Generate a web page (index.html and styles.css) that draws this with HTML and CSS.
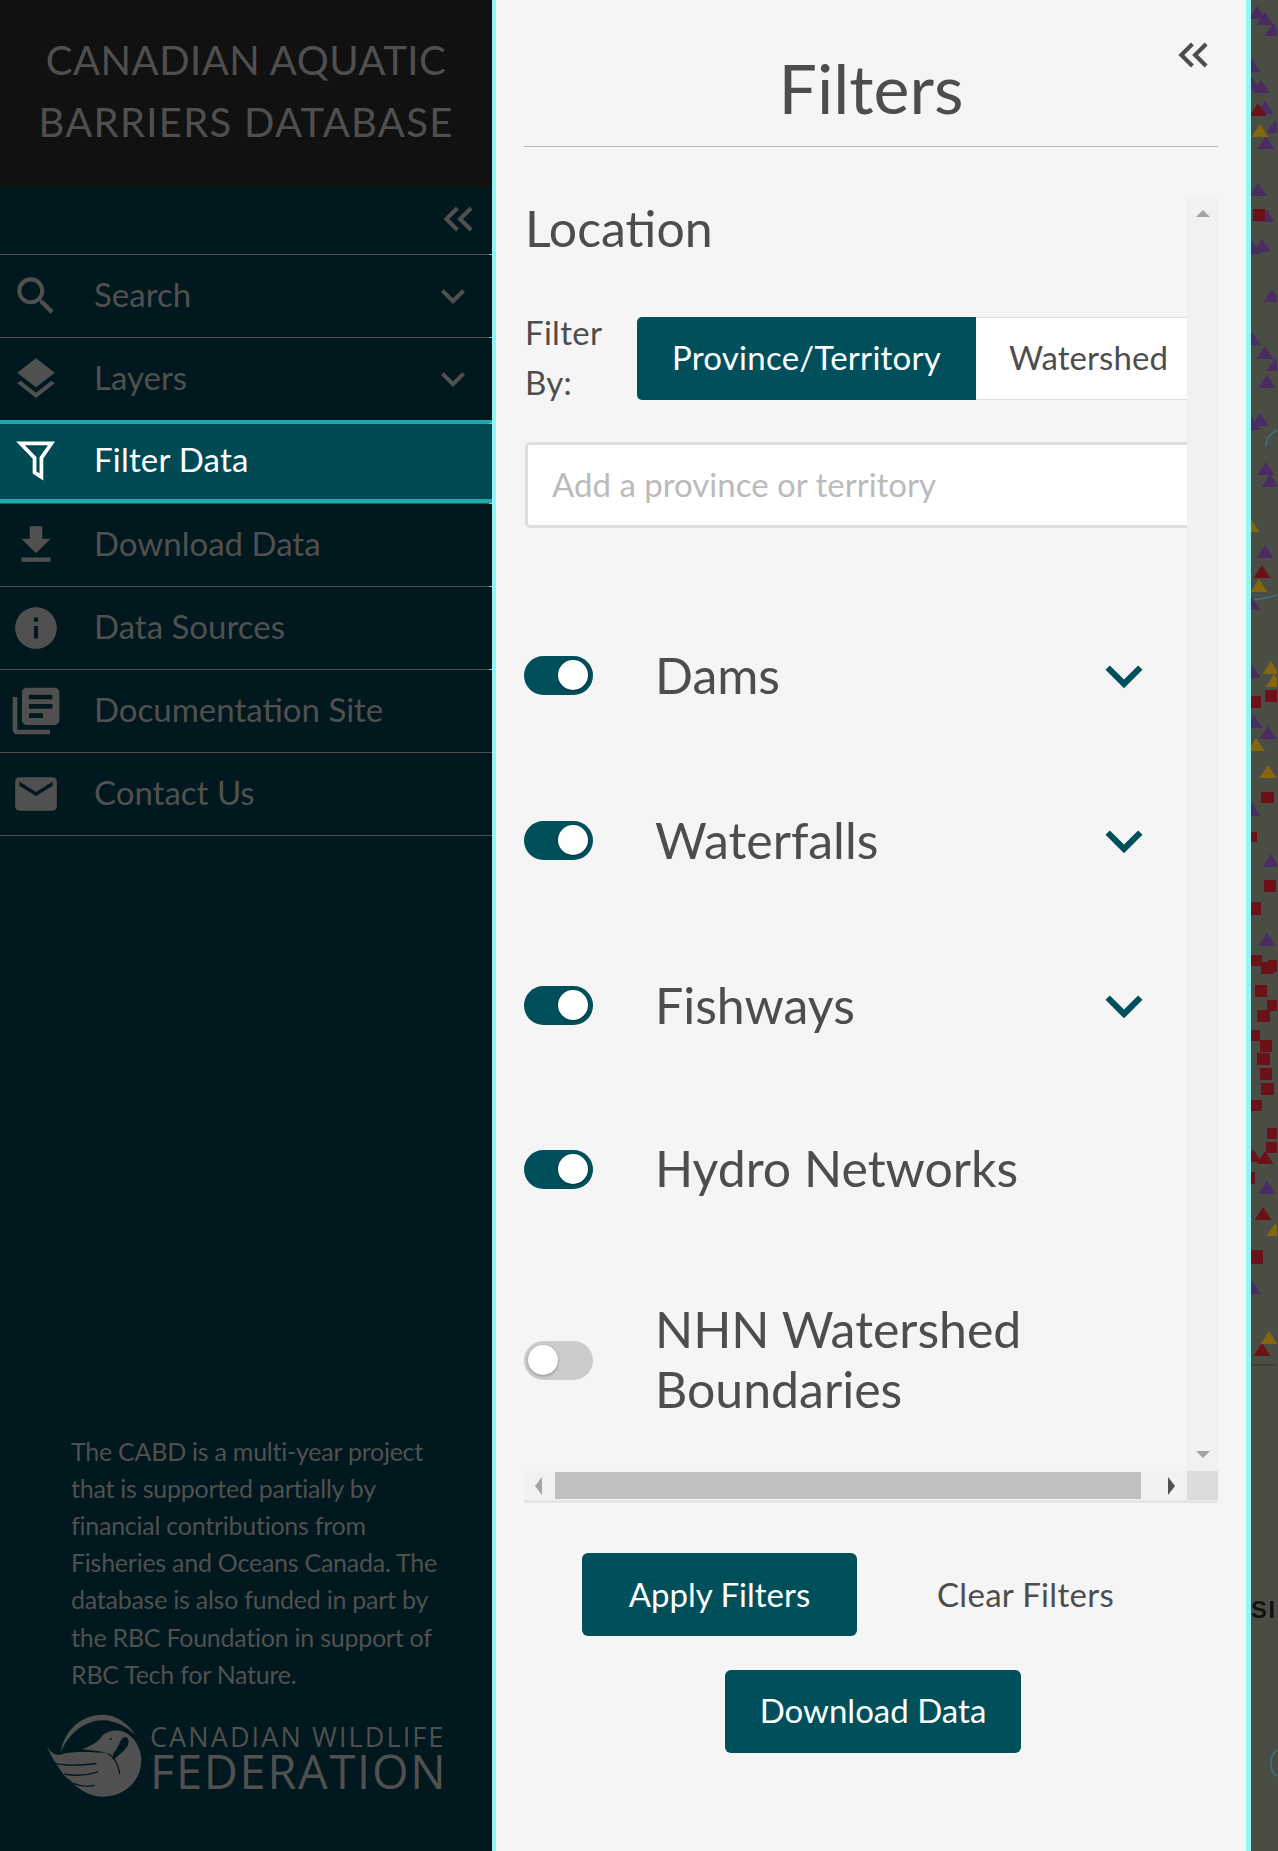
FILE: index.html
```html
<!DOCTYPE html>
<html lang="en">

<head>
    <meta charset="UTF-8">
    <meta name="viewport" content="width=device-width, initial-scale=1.0">
    <title>Canadian Aquatic Barriers Database</title>
    <link rel="stylesheet" href="styles.css">
</head>

<body>
    <aside class="sidebar">
        <div class="brand"><span class="brand-one">CANADIAN AQUATIC</span><br><span class="brand-two">BARRIERS DATABASE</span></div>
        <div class="collapse-row">
            <svg class="ico-collapse" viewBox="0 0 24 24"><path d="M17.59 18 19 16.59 14.42 12 19 7.41 17.59 6l-6 6zM11 18l1.41-1.41L7.83 12l4.58-4.59L11 6l-6 6z"/></svg>
        </div>
        <nav class="nav">
            <div class="nav-item">
                <svg class="ico" viewBox="0 0 24 24"><path d="M15.5 14h-.79l-.28-.27C15.41 12.59 16 11.11 16 9.5 16 5.91 13.09 3 9.5 3S3 5.91 3 9.5 5.91 16 9.5 16c1.61 0 3.09-.59 4.23-1.57l.27.28v.79l5 4.99L20.49 19l-4.99-5zm-6 0C7.01 14 5 11.99 5 9.5S7.01 5 9.5 5 14 7.01 14 9.5 11.99 14 9.5 14z"/></svg>
                <span class="nav-label">Search</span>
                <svg class="ico-more" viewBox="0 0 24 24"><path d="M16.59 8.59 12 13.17 7.41 8.59 6 10l6 6 6-6z"/></svg>
            </div>
            <div class="nav-item">
                <svg class="ico" viewBox="0 0 24 24"><path d="M11.99 18.54l-7.37-5.73L3 14.07l9 7 9-7-1.63-1.27-7.38 5.74zM12 16l7.36-5.73L21 9l-9-7-9 7 1.63 1.27L12 16z"/></svg>
                <span class="nav-label">Layers</span>
                <svg class="ico-more" viewBox="0 0 24 24"><path d="M16.59 8.59 12 13.17 7.41 8.59 6 10l6 6 6-6z"/></svg>
            </div>
            <div class="nav-item active">
                <svg class="ico" viewBox="0 0 24 24"><path d="M4.6 3.1H19.4L14.6 10V19.2L11.3 17V10Z" fill="none" stroke="#fff" stroke-width="1.8"/></svg>
                <span class="nav-label">Filter Data</span>
            </div>
            <div class="nav-item">
                <svg class="ico" viewBox="0 0 24 24"><path d="M19 9h-4V3H9v6H5l7 7 7-7zM5 18v2h14v-2H5z"/></svg>
                <span class="nav-label">Download Data</span>
            </div>
            <div class="nav-item">
                <svg class="ico" viewBox="0 0 24 24"><path d="M12 2C6.48 2 2 6.48 2 12s4.48 10 10 10 10-4.48 10-10S17.52 2 12 2zm1 15h-2v-6h2v6zm0-8h-2V7h2v2z"/></svg>
                <span class="nav-label">Data Sources</span>
            </div>
            <div class="nav-item">
                <svg class="ico ico-docs" viewBox="0 0 24 24"><path d="M4 6H2v14c0 1.1.9 2 2 2h14v-2H4V6zm16-4H8c-1.1 0-2 .9-2 2v12c0 1.1.9 2 2 2h12c1.1 0 2-.9 2-2V4c0-1.1-.9-2-2-2zm-1 9H9V9h10v2zm-4 4H9v-2h6v2zm4-8H9V5h10v2z"/></svg>
                <span class="nav-label">Documentation Site</span>
            </div>
            <div class="nav-item">
                <svg class="ico" viewBox="0 0 24 24"><path d="M20 4H4c-1.1 0-1.99.9-1.99 2L2 18c0 1.1.9 2 2 2h16c1.1 0 2-.9 2-2V6c0-1.1-.9-2-2-2zm0 4l-8 5-8-5V6l8 5 8-5v2z"/></svg>
                <span class="nav-label">Contact Us</span>
            </div>
        </nav>
        <div class="sidebar-foot">
            <p class="funding">The CABD is a multi-year project that is supported partially by financial contributions from Fisheries and Oceans Canada. The database is also funded in part by the RBC Foundation in support of RBC Tech for Nature.</p>
            <div class="cwf-logo">
                <svg class="cwf-mark" viewBox="15 28 295 256">
                    <path d="M62 148C70 85 120 33 190 33c40 0 75 27 98 62-26-25-63-45-98-45-55 0-105 40-128 98z"/>
                    <path d="M125 137c25-9 47-19 60-37 10-15 40-24 65-16 35 14 55 51 55 86 0 62-50 110-115 110-30 0-60-12-90-40-15-15-25-20-32-30-10-18-26-33-48-82 15 22 28 30 45 24 35-9 95-7 140-2-20-8-55-10-80-13z"/>
                    <g class="cwf-gaps">
                        <path d="M45 180c40 10 85 5 125 0"/>
                        <path d="M72 212c33 6 73 3 103-7"/>
                        <path d="M100 240c25 10 50 10 65 5"/>
                        <path d="M205 150c17 10 30 30 35 62"/>
                    </g>
                    <path class="cwf-cut" d="M255 100c13 0 15 18 7 30-10 15-27 25-40 40-7-10-2-20 6-30 12-15 12-35 27-40z"/>
                    <circle class="cwf-cut" cx="213" cy="107" r="3"/>
                </svg>
                <div class="cwf-text">
                    <div class="cwf-top">CANADIAN WILDLIFE</div>
                    <div class="cwf-bottom">FEDERATION</div>
                </div>
            </div>
        </div>
    </aside>

    <main class="panel">
        <div class="panel-head">
            <h1>Filters</h1>
            <svg class="panel-collapse" viewBox="0 0 24 24"><path d="M17.59 18 19 16.59 14.42 12 19 7.41 17.59 6l-6 6zM11 18l1.41-1.41L7.83 12l4.58-4.59L11 6l-6 6z"/></svg>
        </div>

        <div class="scroll-box">
            <div class="scroll-body">
                <div class="scroll-content">
                    <h2>Location</h2>
                    <div class="filter-by">
                        <div class="filter-by-label">Filter<br>By:</div>
                        <div class="segment">
                            <div class="seg-btn seg-on">Province/Territory</div>
                            <div class="seg-btn">Watershed</div>
                        </div>
                    </div>
                    <div class="place-input">Add a province or territory</div>

                    <div class="layer-row first">
                        <span class="toggle on"></span>
                        <span class="layer-name">Dams</span>
                        <svg class="layer-more" viewBox="0 0 24 24"><path d="M16.59 8.59 12 13.17 7.41 8.59 6 10l6 6 6-6z"/></svg>
                    </div>
                    <div class="layer-row">
                        <span class="toggle on"></span>
                        <span class="layer-name">Waterfalls</span>
                        <svg class="layer-more" viewBox="0 0 24 24"><path d="M16.59 8.59 12 13.17 7.41 8.59 6 10l6 6 6-6z"/></svg>
                    </div>
                    <div class="layer-row">
                        <span class="toggle on"></span>
                        <span class="layer-name">Fishways</span>
                        <svg class="layer-more" viewBox="0 0 24 24"><path d="M16.59 8.59 12 13.17 7.41 8.59 6 10l6 6 6-6z"/></svg>
                    </div>
                    <div class="layer-row short">
                        <span class="toggle on"></span>
                        <span class="layer-name">Hydro Networks</span>
                    </div>
                    <div class="layer-row tall">
                        <span class="toggle"></span>
                        <span class="layer-name">NHN Watershed<br>Boundaries</span>
                    </div>
                </div>
                <div class="vbar">
                    <span class="arrow-up"></span>
                    <span class="arrow-down"></span>
                </div>
            </div>
            <div class="hbar">
                <div class="hbar-track">
                    <span class="arrow-left"></span>
                    <div class="hbar-thumb"></div>
                    <span class="arrow-right"></span>
                </div>
                <div class="hbar-corner"></div>
            </div>
        </div>

        <div class="actions">
            <div class="actions-row">
                <div class="btn btn-apply">Apply Filters</div>
                <div class="btn-plain">Clear Filters</div>
            </div>
            <div class="btn btn-download">Download Data</div>
        </div>
    </main>

    <div class="map">
        <svg class="map-svg" viewBox="0 0 26 1851" width="26" height="1851">
            <defs>
                <polygon id="tri" points="-8.5,6 0,-7 8.5,6"/>
            </defs>
            <g class="map-blue">
                <path d="M26 430c-5 3-10 6-11 16M26 595c-8 3-16 4-26 5"/>
                <path d="M26 1750c-8 5-8 22 0 26"/>
            </g>
            <g class="map-purple">
                <use href="#tri" x="6" y="13"/><use href="#tri" x="14" y="19"/><use href="#tri" x="22" y="30"/>
                <use href="#tri" x="1" y="66"/><use href="#tri" x="10" y="87"/><use href="#tri" x="1" y="84"/><use href="#tri" x="14" y="108"/>
                <use href="#tri" x="24" y="127"/><use href="#tri" x="15" y="143"/><use href="#tri" x="7" y="190"/>
                <use href="#tri" x="15" y="216"/><use href="#tri" x="11" y="246"/><use href="#tri" x="1" y="248"/>
                <use href="#tri" x="21" y="296"/><use href="#tri" x="1" y="339"/><use href="#tri" x="14" y="353"/>
                <use href="#tri" x="24" y="365"/><use href="#tri" x="16" y="382"/><use href="#tri" x="1" y="424"/>
                <use href="#tri" x="9" y="420"/><use href="#tri" x="15" y="469"/><use href="#tri" x="19" y="481"/>
                <use href="#tri" x="14" y="552"/><use href="#tri" x="1" y="604"/><use href="#tri" x="17" y="733"/>
                <use href="#tri" x="1" y="672"/><use href="#tri" x="3" y="722"/><use href="#tri" x="1" y="810"/>
                <use href="#tri" x="20" y="861"/><use href="#tri" x="16" y="940"/><use href="#tri" x="16" y="1188"/>
                <use href="#tri" x="1" y="1288"/>
            </g>
            <g class="map-red">
                <use href="#tri" x="7" y="110"/><use href="#tri" x="11" y="572"/>
                <use href="#tri" x="2" y="1156"/><use href="#tri" x="14" y="1158"/><use href="#tri" x="12" y="1214"/>
                <use href="#tri" x="11" y="1350"/>
                <rect x="2" y="209" width="12" height="12"/>
                <rect x="0" y="696" width="10" height="12"/>
                <rect x="14" y="690" width="12" height="12"/>
                <rect x="10" y="792" width="13" height="11"/>
                <rect x="0" y="832" width="6" height="10"/>
                <rect x="13" y="880" width="12" height="12"/>
                <rect x="0" y="902" width="10" height="13"/>
                <rect x="0" y="955" width="11" height="11"/>
                <rect x="10" y="962" width="13" height="12"/>
                <rect x="4" y="985" width="12" height="12"/>
                <rect x="0" y="1030" width="9" height="11"/>
                <rect x="16" y="1000" width="10" height="11"/>
                <rect x="6" y="1010" width="13" height="12"/>
                <rect x="9" y="1040" width="12" height="12"/>
                <rect x="17" y="960" width="9" height="12"/>
                <rect x="6" y="1053" width="13" height="12"/>
                <rect x="9" y="1068" width="12" height="12"/>
                <rect x="10" y="1083" width="13" height="12"/>
                <rect x="0" y="1100" width="11" height="11"/>
                <rect x="16" y="1128" width="10" height="11"/>
                <rect x="15" y="1142" width="11" height="11"/>
                <rect x="0" y="1172" width="4" height="12"/>
                <rect x="0" y="1250" width="12" height="14"/>
            </g>
            <g class="map-yellow">
                <use href="#tri" x="9" y="131"/><use href="#tri" x="0" y="526"/><use href="#tri" x="8" y="586"/>
                <use href="#tri" x="20" y="668"/><use href="#tri" x="5" y="745"/><use href="#tri" x="17" y="772"/>
                <use href="#tri" x="23" y="681"/><use href="#tri" x="18" y="1338"/><use href="#tri" x="24" y="1230"/>
            </g>
            <path class="map-edge" d="M0 1365H26"/>
            <text class="map-label" x="0" y="1618">SI</text>
        </svg>
    </div>
</body>

</html>
```

FILE: styles.css
```css
* {
    box-sizing: border-box;
}

html,
body {
    margin: 0;
    padding: 0;
    height: 1851px;
    overflow: hidden;
}

body {
    display: flex;
    font-family: Lato, "Open Sans", sans-serif;
    background-color: #4a4d43;
}

/* left navigation */
.sidebar {
    width: 496px;
    flex: none;
    height: 100%;
    display: flex;
    flex-direction: column;
    background-color: #00181e;
    border-right: 4px solid #96f4f4;
    color: #505050;
}

.brand {
    height: 187px;
    padding-top: 29px;
    background-color: #111111;
    color: #4f4f4f;
    text-align: center;
    font-size: 40px;
    line-height: 62px;
}

.brand-one {
    letter-spacing: 0.5px;
}

.brand-two {
    letter-spacing: 1.3px;
}

.collapse-row {
    height: 67px;
    display: flex;
    align-items: center;
    justify-content: flex-end;
    padding-right: 9px;
    padding-bottom: 4px;
}

.ico-collapse {
    width: 50px;
    height: 50px;
    fill: #505050;
}

.nav-item {
    position: relative;
    height: 83px;
    display: flex;
    align-items: center;
    border-top: 1px solid #4f4f4f;
    font-size: 33px;
}

/* little teal tick where a row line meets the panel edge */
.nav-item::after {
    content: "";
    position: absolute;
    top: -1px;
    right: 0;
    width: 3px;
    height: 1px;
    background-color: #5fd0d0;
}

.nav-item:last-child {
    border-bottom: 1px solid #4f4f4f;
    height: 84px;
}

.nav-item:last-child::after {
    display: none;
}

.nav-item .ico {
    width: 50px;
    height: 50px;
    margin-left: 11px;
    margin-right: 33px;
    flex: none;
    fill: #505050;
}

.nav-item .ico-docs {
    width: 56px;
    height: 56px;
    margin-left: 8px;
    margin-right: 30px;
}

.nav-label {
    flex: 1;
    padding-bottom: 4px;
}

.ico-more {
    width: 48px;
    height: 48px;
    margin-right: 15px;
    fill: #505050;
}

.nav-item.active {
    background-color: #004a55;
    border-top: 4px solid #1fa9ad;
    border-bottom: 4px solid #1fa9ad;
    color: #ffffff;
    letter-spacing: 0.2px;
}

.nav-item.active .nav-label {
    padding-bottom: 6px;
}

.sidebar-foot {
    margin-top: auto;
    padding: 0 0 53px 45px;
}

.funding {
    margin: 0 40px 0 26px;
    font-size: 25px;
    line-height: 37.2px;
    letter-spacing: -0.25px;
}

.cwf-logo {
    display: flex;
    align-items: center;
    gap: 7px;
    margin-top: 20px;
}

.cwf-mark {
    width: 98px;
    height: 85px;
    fill: #505050;
}

.cwf-gaps {
    fill: none;
    stroke: #00181e;
    stroke-width: 4;
}

.cwf-cut {
    fill: #00181e;
}

.cwf-text {
    padding-top: 6px;
    font-family: "Open Sans", Lato, sans-serif;
    color: #505050;
    white-space: nowrap;
}

.cwf-top {
    font-size: 27px;
    line-height: 24px;
    letter-spacing: 2.1px;
}

.cwf-bottom {
    font-size: 47px;
    line-height: 44px;
    letter-spacing: 1.7px;
}

/* filter panel */
.panel {
    width: 755px;
    flex: none;
    height: 100%;
    padding: 0 28px;
    background-color: #f5f5f5;
    border-right: 5px solid #96f4f4;
    color: #4d4d4d;
}

.panel-head {
    position: relative;
    height: 147px;
    border-bottom: 1px solid #b5b5b5;
    text-align: center;
}

.panel-head h1 {
    margin: 0;
    padding-top: 44px;
    font-size: 68px;
    line-height: 88px;
    font-weight: 400;
}

.panel-collapse {
    position: absolute;
    top: 30px;
    right: 0;
    width: 50px;
    height: 50px;
    fill: #4d4d4d;
}

.scroll-box {
    margin-top: 50px;
    height: 1306px;
    display: flex;
    flex-direction: column;
}

.scroll-body {
    height: 1274px;
    display: flex;
}

.scroll-content {
    flex: 1;
    overflow: hidden;
    min-width: 0;
    padding-left: 1px;
}

.scroll-content h2 {
    margin: -2px 0 0;
    font-size: 50px;
    line-height: 66px;
    font-weight: 400;
}

.filter-by {
    display: flex;
    margin-top: 56px;
    gap: 34px;
}

.filter-by-label {
    width: 78px;
    flex: none;
    font-size: 33px;
    line-height: 50px;
    margin-top: -10px;
    letter-spacing: 0.3px;
}

.segment {
    display: flex;
    flex: none;
    height: 83px;
}

.seg-btn {
    display: flex;
    align-items: center;
    padding: 0 19px 3px 33px;
    background-color: #ffffff;
    border: solid #e0e0e0;
    border-width: 1px 0;
    font-size: 33px;
    letter-spacing: 0.1px;
    white-space: nowrap;
}

.seg-btn.seg-on {
    width: 339px;
    justify-content: center;
    padding: 0 0 3px;
    border: none;
    border-radius: 5px 0 0 5px;
    background-color: #00505c;
    color: #ffffff;
    letter-spacing: 0.25px;
}

.place-input {
    margin-top: 35px;
    width: 760px;
    height: 86px;
    display: flex;
    align-items: center;
    padding: 0 0 2px 24px;
    background-color: #ffffff;
    border: 3px solid #dddddd;
    border-radius: 5px;
    color: #bbbbbb;
    font-size: 33px;
}

.layer-row {
    display: flex;
    align-items: center;
    height: 165px;
    margin-left: -1px;
}

.layer-row.first {
    margin-top: 65px;
}

.layer-row.short {
    height: 162px;
}

.layer-row.tall {
    height: 220px;
}

.toggle {
    position: relative;
    width: 69px;
    height: 39px;
    flex: none;
    margin-right: 62px;
    border-radius: 20px;
    background-color: #cccccc;
}

.toggle::after {
    content: "";
    position: absolute;
    top: 4px;
    left: 4px;
    width: 30px;
    height: 30px;
    border-radius: 50%;
    background-color: #ffffff;
    box-shadow: 0 1px 3px rgba(0, 0, 0, 0.35);
}

.toggle.on {
    background-color: #00505c;
}

.toggle.on::after {
    left: 34px;
}

.layer-name {
    flex: 1;
    padding-bottom: 2px;
    font-size: 50px;
    line-height: 60px;
}

.layer-more {
    width: 74px;
    height: 74px;
    margin-right: 26px;
    fill: #00505c;
}

.vbar {
    position: relative;
    width: 31px;
    flex: none;
    background-color: #f1f1f1;
}

.arrow-up,
.arrow-down {
    position: absolute;
    left: 9px;
    border-left: 7px solid transparent;
    border-right: 7px solid transparent;
}

.arrow-up {
    top: 13px;
    border-bottom: 7px solid #a3a3a3;
}

.arrow-down {
    bottom: 13px;
    border-top: 7px solid #a3a3a3;
}

.hbar {
    height: 32px;
    display: flex;
    background-color: #f1f1f1;
    border-bottom: 3px solid #e6e6e6;
}

.hbar-track {
    flex: 1;
    display: flex;
    align-items: center;
    padding: 0 12px 0 11px;
}

.hbar-thumb {
    width: 586px;
    height: 27px;
    margin-left: 13px;
    background-color: #c0c0c0;
}

.hbar-corner {
    width: 31px;
    background-color: #dcdcdc;
}

.arrow-left,
.arrow-right {
    border-top: 9px solid transparent;
    border-bottom: 9px solid transparent;
}

.arrow-left {
    border-right: 7px solid #a3a3a3;
}

.arrow-right {
    margin-left: auto;
    border-left: 7px solid #505050;
}

.actions {
    margin-top: 50px;
}

.actions-row {
    display: flex;
    align-items: center;
    padding-left: 58px;
}

.btn {
    display: flex;
    align-items: center;
    justify-content: center;
    height: 83px;
    padding-bottom: 2px;
    background-color: #00505c;
    color: #ffffff;
    border-radius: 6px;
    font-size: 33px;
}

.btn-apply {
    width: 275px;
}

.btn-plain {
    margin-left: 80px;
    padding-bottom: 2px;
    font-size: 33px;
    letter-spacing: 0.3px;
}

.btn-download {
    width: 296px;
    margin: 34px 0 0 201px;
    padding-bottom: 4px;
}

/* map strip behind the panels */
.map {
    flex: 1;
    position: relative;
    overflow: hidden;
    background-color: #4a4d43;
}

.map-svg {
    display: block;
    filter: blur(0.6px);
}

.map-purple {
    fill: #4a2c63;
}

.map-red {
    fill: #6d1119;
}

.map-yellow {
    fill: #85660f;
}

.map-blue {
    fill: none;
    stroke: #3c7382;
    stroke-width: 1.5;
}

.map-edge {
    stroke: #33362f;
    stroke-width: 1;
}

.map-label {
    font-family: "Liberation Sans", sans-serif;
    font-size: 24px;
    font-weight: 700;
    fill: #111111;
    letter-spacing: 1.5px;
}
```
